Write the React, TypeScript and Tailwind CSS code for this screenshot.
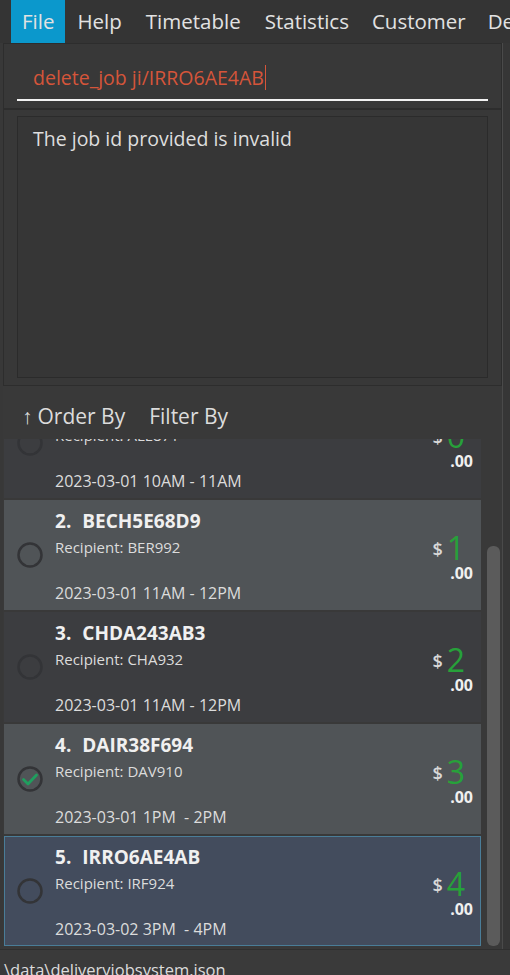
import React from "react";

type Job = {
  idx: number;
  id: string;
  recipient: string;
  date: string;
  amount: string;
  variant: "dark" | "light" | "selected";
  done?: boolean;
};

const jobs: Job[] = [
  { idx: 1, id: "ALEX0E8B71", recipient: "ALE871", date: "2023-03-01 10AM - 11AM", amount: "0", variant: "dark" },
  { idx: 2, id: "BECH5E68D9", recipient: "BER992", date: "2023-03-01 11AM - 12PM", amount: "1", variant: "light" },
  { idx: 3, id: "CHDA243AB3", recipient: "CHA932", date: "2023-03-01 11AM - 12PM", amount: "2", variant: "dark" },
  { idx: 4, id: "DAIR38F694", recipient: "DAV910", date: "2023-03-01 1PM\u00a0 - 2PM", amount: "3", variant: "light", done: true },
  { idx: 5, id: "IRRO6AE4AB", recipient: "IRF924", date: "2023-03-02 3PM\u00a0 - 4PM", amount: "4", variant: "selected" },
];

function Circle({ done }: { done?: boolean }) {
  return (
    <svg width="26" height="26" viewBox="0 0 26 26" className="shrink-0">
      <circle cx="13" cy="13" r="11.5" fill="none" stroke="#333437" strokeWidth="2.5" />
      {done && (
        <path d="M6.5 13.5 L11 18 L19.5 9" fill="none" stroke="#1f9e5e" strokeWidth="2.8" strokeLinecap="round" strokeLinejoin="round" />
      )}
    </svg>
  );
}

function Card({ job }: { job: Job }) {
  const bg =
    job.variant === "light"
      ? "bg-[#505457] border-[#505457]"
      : job.variant === "selected"
      ? "bg-[#434c5d] border-[#4a7d98]"
      : "bg-[#3c3d40] border-[#3c3d40]";
  return (
    <div className={`h-[110px] border ${bg} flex items-center pl-[12px] pr-[7px]`}>
      <Circle done={job.done} />
      <div className="flex-1 flex flex-col pl-[12px] h-full pt-[8px] whitespace-nowrap">
        <div className="text-[19px] font-bold text-[#f0f0f0] leading-[24px] flex">
          <span>{job.idx}.</span>
          <span className="ml-[11px]">{job.id}</span>
        </div>
        <div className="text-[15px] text-[#dcdcdc] leading-[22px] mt-[3px]">Recipient: {job.recipient}</div>
        <div className="text-[16px] text-[#dcdcdc] leading-[20px] mt-auto mb-[6px]">{job.date}</div>
      </div>
      <div className="flex flex-col items-end pt-[4px]">
        <div className="flex items-center">
          <span className="text-[18px] font-semibold text-[#d8d8d8] mr-[4px] mt-[2px]">$</span>
          <span className="text-[32px] leading-[34px] text-[#27a13a] mr-[8px]">{job.amount}</span>
        </div>
        <div className="text-[16px] font-bold text-[#f0f0f0] leading-[20px] mt-[-2px]">.00</div>
      </div>
    </div>
  );
}

export default function App() {
  return (
    <div
      className="w-[510px] h-[975px] bg-[#383838] flex flex-col overflow-hidden text-[#e0e0e0]"
      style={{ fontFamily: '"Open Sans", "Noto Sans", sans-serif' }}
    >
      {/* Menu bar */}
      <div className="h-[43px] bg-[#343434] flex items-stretch pl-[11px] text-[20.5px] text-[#e2e2e2] whitespace-nowrap shrink-0">
        <div className="bg-[#0b98cc] px-[11px] flex items-center">File</div>
        <div className="px-[12px] flex items-center">Help</div>
        <div className="px-[12px] flex items-center">Timetable</div>
        <div className="px-[12px] flex items-center">Statistics</div>
        <div className="px-[11px] flex items-center">Customer</div>
        <div className="px-[11px] flex items-center">Delivery</div>
      </div>

      <div className="flex-1 flex min-h-0">
        <div className="flex-1 flex flex-col min-w-0 pl-[3px]">
          {/* Command box */}
          <div className="h-[66px] border border-[#2d2d2d] bg-[#383838] px-[13px] flex flex-col shrink-0">
            <div className="h-[53px] pt-[14px] flex items-center pl-[16px] text-[19.5px] text-[#d5553a] whitespace-nowrap">
              <span>delete_job ji/IRRO6AE4AB</span>
              <span className="w-[1.5px] h-[25px] bg-[#d5553a] ml-[1px]" />
            </div>
            <div className="h-[2px] bg-[#f2f2f2] mt-[2px]" />
          </div>

          {/* Result box */}
          <div className="h-[277px] border border-[#2d2d2d] bg-[#383838] px-[13px] pt-[6px] pb-[7px] flex flex-col shrink-0">
            <div className="flex-1 border border-[#2b2b2b] bg-[#363636] pl-[15px] pt-[7px] text-[19.5px] text-[#dedede]">
              The job id provided is invalid
            </div>
          </div>

          {/* Order / Filter header */}
          <div className="h-[53px] bg-[#393939] flex items-center pl-[19px] text-[21px] text-[#dcdcdc] shrink-0 pt-[8px] whitespace-nowrap">
            <span className="mr-[5px]">↑</span>
            <span>Order By</span>
            <span className="ml-[24px]">Filter By</span>
          </div>

          {/* List */}
          <div className="flex-1 flex min-h-0 bg-[#393939]">
            <div className="flex-1 overflow-hidden pl-[1px]">
              <div className="flex flex-col gap-[2px] mt-[-51px]">
                {jobs.map((j) => (
                  <Card key={j.idx} job={j} />
                ))}
              </div>
            </div>
            <div className="w-[21px] flex justify-end pr-[2px] shrink-0">
              <div className="w-[13px] mt-[107px] mb-[3px] rounded-[6px] bg-[#5b5b5b]" />
            </div>
          </div>
        </div>
        <div className="w-[1px] bg-[#4a4a4a]" />
        <div className="w-[7px] bg-[#363636]" />
      </div>

      {/* Status bar */}
      <div className="h-[26px] bg-[#3a3a3a] border-t border-[#2f2f2f] pl-[4px] pt-[8px] text-[16.5px] text-[#dcdcdc] leading-[24px] shrink-0 overflow-hidden whitespace-nowrap">
        \data\deliveryjobsystem.json
      </div>
    </div>
  );
}
